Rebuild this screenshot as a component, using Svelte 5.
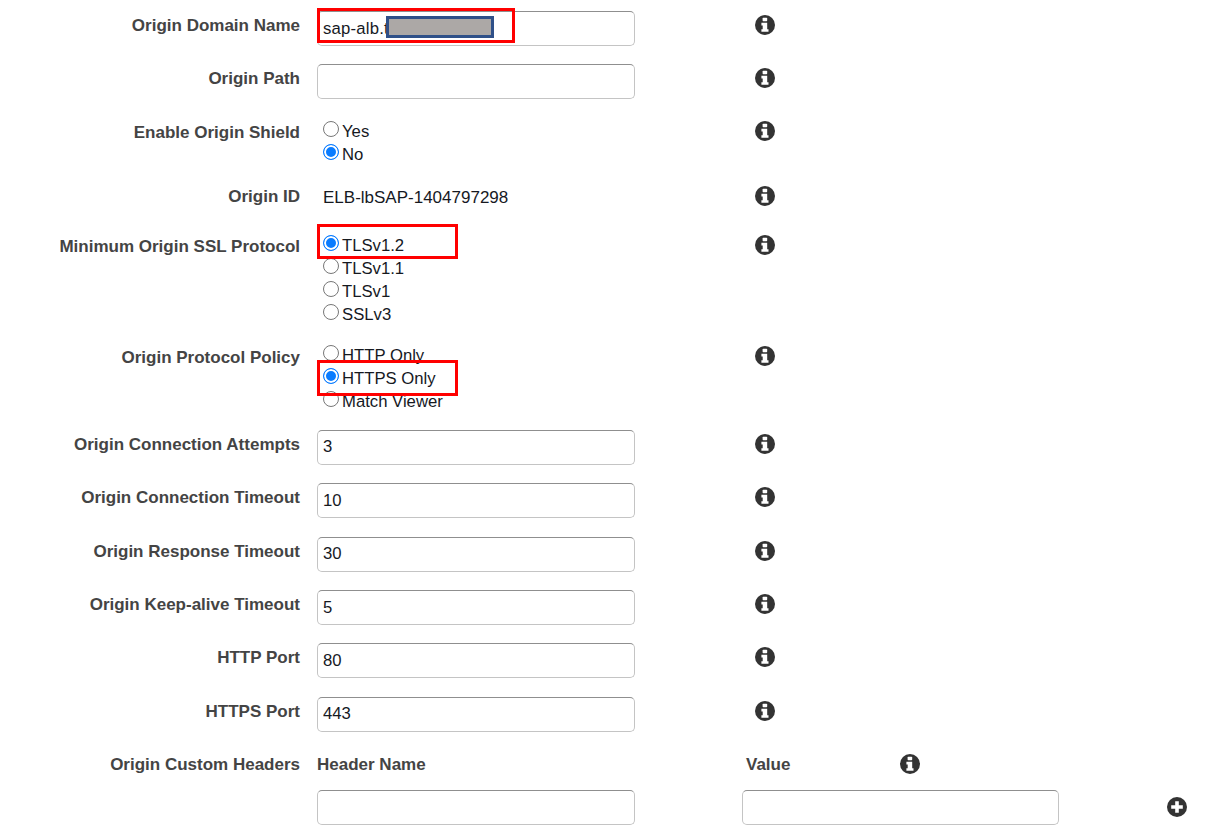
<script>
    const rows = [
        {label: "Origin Domain Name", type: "domain", value: "sap-alb.t"},
        {label: "Origin Path", type: "text", value: ""},
        {label: "Enable Origin Shield", type: "radio", cls: "shield", name: "shield", options: ["Yes", "No"], selected: "No"},
        {label: "Origin ID", type: "static", cls: "origin-id", value: "ELB-lbSAP-1404797298"},
        {label: "Minimum Origin SSL Protocol", type: "radio", cls: "min-ssl", name: "ssl", options: ["TLSv1.2", "TLSv1.1", "TLSv1", "SSLv3"], selected: "TLSv1.2", marked: "TLSv1.2"},
        {label: "Origin Protocol Policy", type: "radio", cls: "policy", name: "policy", options: ["HTTP Only", "HTTPS Only", "Match Viewer"], selected: "HTTPS Only", marked: "HTTPS Only"},
        {label: "Origin Connection Attempts", type: "text", value: "3"},
        {label: "Origin Connection Timeout", type: "text", value: "10"},
        {label: "Origin Response Timeout", type: "text", value: "30"},
        {label: "Origin Keep-alive Timeout", type: "text", value: "5"},
        {label: "HTTP Port", type: "text", value: "80"},
        {label: "HTTPS Port", type: "text", value: "443"}
    ];
</script>

{#snippet info()}
    <svg class="icon" viewBox="0 0 20 20" width="20" height="20" aria-hidden="true">
        <circle cx="10" cy="10" r="10" fill="#333" />
        <rect x="7.6" y="2.8" width="4.6" height="3.4" rx="0.7" fill="#fff" />
        <path d="M6.4 7.8h5.8v6.4h1.3v2.6H6.4v-2.6h1.3v-3.8H6.4z" fill="#fff" />
    </svg>
{/snippet}

<form class="form">
    {#each rows as row}
        <div class="row {row.type} {row.cls || ''}">
            <div class="label">{row.label}</div>

            {#if row.type === "text"}
                <input class="field" type="text" value={row.value} />
            {:else if row.type === "domain"}
                <div class="domain-box">
                    <input class="field" type="text" value={row.value} />
                    <span class="redacted"></span>
                    <span class="marker"></span>
                </div>
            {:else if row.type === "static"}
                <div class="static-value">{row.value}</div>
            {:else}
                <div class="options">
                    {#each row.options as option}
                        <label class="option" class:marked={row.marked === option}>
                            <input type="radio" name={row.name} value={option} checked={row.selected === option} />
                            <span>{option}</span>
                        </label>
                    {/each}
                </div>
            {/if}

            <div class="info">{@render info()}</div>
        </div>
    {/each}

    <div class="headers-head">
        <div class="label">Origin Custom Headers</div>
        <div class="col-title">Header Name</div>
        <div class="col-title">Value</div>
        <div class="info">{@render info()}</div>
    </div>

    <div class="headers-row">
        <input class="field" type="text" />
        <input class="field" type="text" />
        <svg class="icon" viewBox="0 0 20 20" width="20" height="20" aria-hidden="true">
            <circle cx="10" cy="10" r="10" fill="#333" />
            <path d="M8.2 4.2h3.6v4h4v3.6h-4v4H8.2v-4h-4V8.2h4z" fill="#fff" />
        </svg>
    </div>
</form>

<style>
    :global(body) {
        background: #fff;
        font-family: "Liberation Sans", Arial, sans-serif;
        font-size: 16.7px;
        color: #16191f;
    }

    .form {
        padding-top: 11px;
        width: 1212px;
        height: 829px;
        box-sizing: border-box;
        overflow: hidden;
    }

    .row {
        display: grid;
        grid-template-columns: 300px 318px 20px;
        column-gap: 17px;
        margin-bottom: 18.4px;
        align-items: start;
    }

    .row .info {
        margin-left: 103px;
    }

    .label {
        text-align: right;
        font-weight: bold;
        font-size: 17px;
        color: #444;
        line-height: 20px;
        padding-top: 3px;
    }

    .text .label,
    .domain .label {
        padding-top: 5px;
    }

    .radio .label {
        padding-top: 4px;
    }

    .info {
        padding-top: 2px;
        line-height: 0;
    }

    .text .info,
    .domain .info {
        padding-top: 4px;
    }

    .shield {
        padding-top: 1px;
        margin-bottom: 19.5px;
    }

    .origin-id {
        margin-bottom: 24.5px;
    }

    .static-value {
        font-size: 17px;
        line-height: 20px;
        padding: 4px 0 0 6px;
    }

    .min-ssl {
        margin-bottom: 18.5px;
    }

    .policy {
        margin-bottom: 17.6px;
    }

    .policy .label {
        padding-top: 5px;
    }

    .policy .info {
        padding-top: 3px;
    }

    .field {
        display: block;
        width: 318px;
        height: 35px;
        box-sizing: border-box;
        padding: 0 5px;
        border: 1px solid #c4c4c4;
        border-top-color: #8f8f8f;
        border-radius: 5px;
        background: #fff;
        font: 16.7px "Liberation Sans", Arial, sans-serif;
        color: #16191f;
        outline: none;
    }

    .domain-box {
        position: relative;
    }

    .domain-box .field {
        letter-spacing: 0.2px;
    }

    .redacted {
        position: absolute;
        left: 69px;
        top: 5px;
        width: 108px;
        height: 22px;
        box-sizing: border-box;
        background: #aca8a6;
        border: 3px solid #2f5088;
    }

    .marker {
        position: absolute;
        left: 0;
        top: -3px;
        width: 198px;
        height: 35px;
        box-sizing: border-box;
        border: 3px solid #f00;
    }

    .options {
        padding-left: 6px;
    }

    .option {
        display: flex;
        align-items: center;
        gap: 3px;
        height: 23px;
        line-height: 23px;
    }

    .option input {
        appearance: none;
        -webkit-appearance: none;
        flex: none;
        width: 16px;
        height: 16px;
        margin: -3px 0 0;
        box-sizing: border-box;
        border: 1px solid #777;
        border-radius: 50%;
        background: #fff;
    }

    .option input:checked {
        border: 1.5px solid #0a7cff;
        background: #0a7cff;
        box-shadow: inset 0 0 0 2px #fff;
    }

    .option span {
        padding-top: 2px;
    }

    .option.marked {
        position: relative;
        z-index: 1;
        background: #fff;
    }

    .option.marked::after {
        content: "";
        position: absolute;
        left: -6px;
        top: -9px;
        width: 141px;
        height: 35px;
        box-sizing: border-box;
        border: 3px solid #f00;
    }

    .policy .option.marked::after {
        top: -6px;
        height: 36px;
    }

    .headers-head {
        display: grid;
        grid-template-columns: 300px 412px 137px 20px;
        column-gap: 17px;
        padding-top: 1.6px;
        margin-top: 18.4px;
        align-items: start;
    }

    .col-title {
        font-weight: bold;
        font-size: 17px;
        color: #444;
        line-height: 20px;
        padding-top: 3px;
    }

    .headers-row {
        display: flex;
        align-items: center;
        margin: 15px 0 0 317px;
        gap: 107px;
    }

    .headers-row .field {
        width: 318px;
        flex: none;
    }

    .headers-row .field + .field {
        width: 317px;
    }

    .headers-row .icon {
        margin-left: 1px;
    }
</style>
